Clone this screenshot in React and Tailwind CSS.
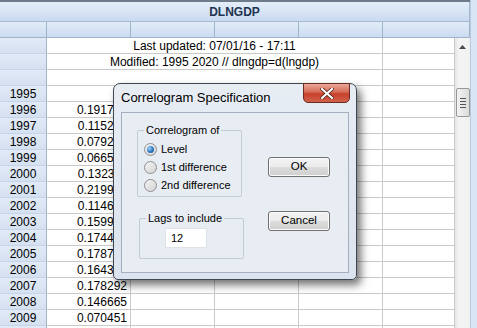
import React from "react";

const data = [
  ["1995", ""],
  ["1996", "0.191735"],
  ["1997", "0.115236"],
  ["1998", "0.079218"],
  ["1999", "0.066514"],
  ["2000", "0.132311"],
  ["2001", "0.219904"],
  ["2002", "0.114631"],
  ["2003", "0.159923"],
  ["2004", "0.174410"],
  ["2005", "0.178744"],
  ["2006", "0.164336"],
  ["2007", "0.178292"],
  ["2008", "0.146665"],
  ["2009", "0.070451"],
  ["", ""],
];

function RowHead({ children }) {
  return (
    <div className="w-[47px] h-full shrink-0 flex items-center justify-center bg-gradient-to-b from-[#e1eaf6] to-[#d5e1f1] border-r border-b border-r-[#9fb3ca] border-b-[#c5d4e6]">
      {children}
    </div>
  );
}

function Cell({ w, children, center }) {
  return (
    <div
      className={`${w} h-full shrink-0 flex items-center bg-white border-r border-b border-[#c9c9c9] ${
        center ? "justify-center" : "justify-end pr-[3px]"
      }`}
    >
      {children}
    </div>
  );
}

function Radio({ checked }) {
  return (
    <div className="w-[13px] h-[13px] rounded-full border border-[#8e8f8f] bg-gradient-to-br from-[#f4f4f4] to-[#d4d4d4] flex items-center justify-center shrink-0">
      {checked && (
        <div className="w-[7px] h-[7px] rounded-full bg-[radial-gradient(circle_at_35%_35%,#9fd0f5,#2c78c2_55%,#1c4f86)]" />
      )}
    </div>
  );
}

function Btn({ children }) {
  return (
    <div className="w-[62px] h-[20px] rounded-[3px] border border-[#707070] bg-[linear-gradient(#f3f3f3_0%,#ebebeb_50%,#dcdcdc_51%,#cfcfcf_100%)] flex items-center justify-center text-[11.5px] text-black shadow-[inset_0_0_0_1px_#fbfbfb]">
      {children}
    </div>
  );
}

export default function App() {
  return (
    <div
      className="relative w-[477px] h-[328px] overflow-hidden flex bg-[#d9e5f4] text-[12px] text-black"
      style={{ fontFamily: '"Liberation Sans", Arial, sans-serif' }}
    >
      <div className="w-[470px] shrink-0 flex flex-col">
        <div className="h-[2px] bg-[#6e7b8b] shrink-0" />
        <div className="h-[20px] shrink-0 flex items-center justify-center bg-gradient-to-b from-[#e4eef9] to-[#c9daef] border-b border-r border-[#a6bbd3] font-bold text-[#1f3350]">
          DLNGDP
        </div>
        <div className="h-[16px] shrink-0 flex bg-gradient-to-b from-[#e2ecf8] to-[#cbdcf0] border-b border-[#9fb3ca]">
          <div className="w-[47px] border-r border-[#9fb3ca]" />
          <div className="w-[84px] border-r border-[#9fb3ca]" />
          <div className="w-[84px] border-r border-[#9fb3ca]" />
          <div className="w-[84px] border-r border-[#9fb3ca]" />
          <div className="w-[84px] border-r border-[#9fb3ca]" />
          <div className="w-[87px] border-r border-[#9fb3ca]" />
        </div>
        <div className="flex flex-1 min-h-0">
          <div className="w-[455px] shrink-0 flex flex-col">
            <div className="h-[16px] flex shrink-0">
              <RowHead />
              <Cell w="w-[336px]" center>
                Last updated: 07/01/16 - 17:11
              </Cell>
              <Cell w="w-[72px]" />
            </div>
            <div className="h-[16px] flex shrink-0">
              <RowHead />
              <Cell w="w-[336px]" center>
                Modified: 1995 2020 // dlngdp=d(lngdp)
              </Cell>
              <Cell w="w-[72px]" />
            </div>
            <div className="h-[16px] flex shrink-0">
              <RowHead />
              <Cell w="w-[336px]" center />
              <Cell w="w-[72px]" />
            </div>
            {data.map(([y, v], i) => (
              <div key={i} className="h-[16px] flex shrink-0">
                <RowHead>{y}</RowHead>
                <Cell w="w-[84px]">{v}</Cell>
                <Cell w="w-[84px]" />
                <Cell w="w-[84px]" />
                <Cell w="w-[84px]" />
                <Cell w="w-[72px]" />
              </div>
            ))}
          </div>
          <div className="w-[15px] shrink-0 bg-[linear-gradient(90deg,#e6e6e6,#f4f4f4_30%,#f1f1f1)] flex flex-col items-center">
            <svg width="7" height="4" viewBox="0 0 7 4" className="mt-[7px]">
              <path d="M0 4 L3.5 0 L7 4 Z" fill="#4a4a4a" />
            </svg>
            <div className="mt-[39px] w-[14px] h-[29px] rounded-[2px] border border-[#979797] bg-gradient-to-r from-[#f3f3f3] to-[#dcdcdc] flex flex-col items-center justify-center gap-[2px]">
              <div className="w-[6px] h-[1px] bg-[#555]" />
              <div className="w-[6px] h-[1px] bg-[#555]" />
              <div className="w-[6px] h-[1px] bg-[#555]" />
              <div className="w-[6px] h-[1px] bg-[#555]" />
            </div>
          </div>
        </div>
      </div>
      <div className="flex-1 bg-[#d9e5f4] border-l border-[#b8c9de]" />

      {/* Dialog */}
      <div className="absolute left-[113px] top-[83px] w-[244px] h-[197px] rounded-t-[7px] rounded-b-[5px] border border-[#3e4650] bg-[linear-gradient(#e8edf4,#dbe3ee)] shadow-[4px_5px_9px_rgba(0,0,0,0.55)] pt-[28px] px-[7px] pb-[6px]">
        <div className="absolute left-[7px] top-[5px] text-[13px] text-black leading-[18px]">
          Correlogram Specification
        </div>
        <div className="absolute left-[189px] top-[-1px] w-[47px] h-[20px] rounded-b-[5px] border border-[#6b2a22] bg-[linear-gradient(#e9a99b,#d66a55_45%,#c7402b_55%,#d0624c)] flex items-center justify-center">
          <svg width="14" height="11" viewBox="0 0 14 11">
            <path d="M2 1 L12 10 M12 1 L2 10" stroke="#4a1a14" strokeWidth="3.6" strokeLinecap="square" />
            <path d="M2 1 L12 10 M12 1 L2 10" stroke="#ffffff" strokeWidth="2.2" strokeLinecap="square" />
          </svg>
        </div>
        <div className="w-full h-full border border-[#a3afbf] bg-[#e8ecf3] flex text-[11px]">
          <div className="flex flex-col pl-[15px] pt-[17px]">
            <div className="relative w-[105px] h-[67px] border border-[#c5ccd6] rounded-[2px] pt-[11px] pl-[6px] flex flex-col gap-[4px]">
              <div className="absolute left-[6px] top-[-10px] px-[2px] bg-[#e8ecf3] leading-[18px]">
                Correlogram of
              </div>
              <div className="flex items-center gap-[4px] h-[14px]">
                <Radio checked />
                <span>Level</span>
              </div>
              <div className="flex items-center gap-[4px] h-[14px]">
                <Radio />
                <span>1st difference</span>
              </div>
              <div className="flex items-center gap-[4px] h-[14px]">
                <Radio />
                <span>2nd difference</span>
              </div>
            </div>
            <div className="relative ml-[2px] mt-[21px] w-[105px] h-[41px] border border-[#c5ccd6] rounded-[2px] pt-[9px] pl-[25px]">
              <div className="absolute left-[6px] top-[-10px] px-[2px] bg-[#e8ecf3] leading-[18px]">
                Lags to include
              </div>
              <div className="w-[42px] h-[20px] bg-white border border-[#dfe3e8] flex items-center pl-[5px]">
                12
              </div>
            </div>
          </div>
          <div className="flex flex-col ml-[24px] pt-[44px]">
            <Btn>OK</Btn>
            <div className="mt-[34px]">
              <Btn>Cancel</Btn>
            </div>
          </div>
        </div>
      </div>
    </div>
  );
}
